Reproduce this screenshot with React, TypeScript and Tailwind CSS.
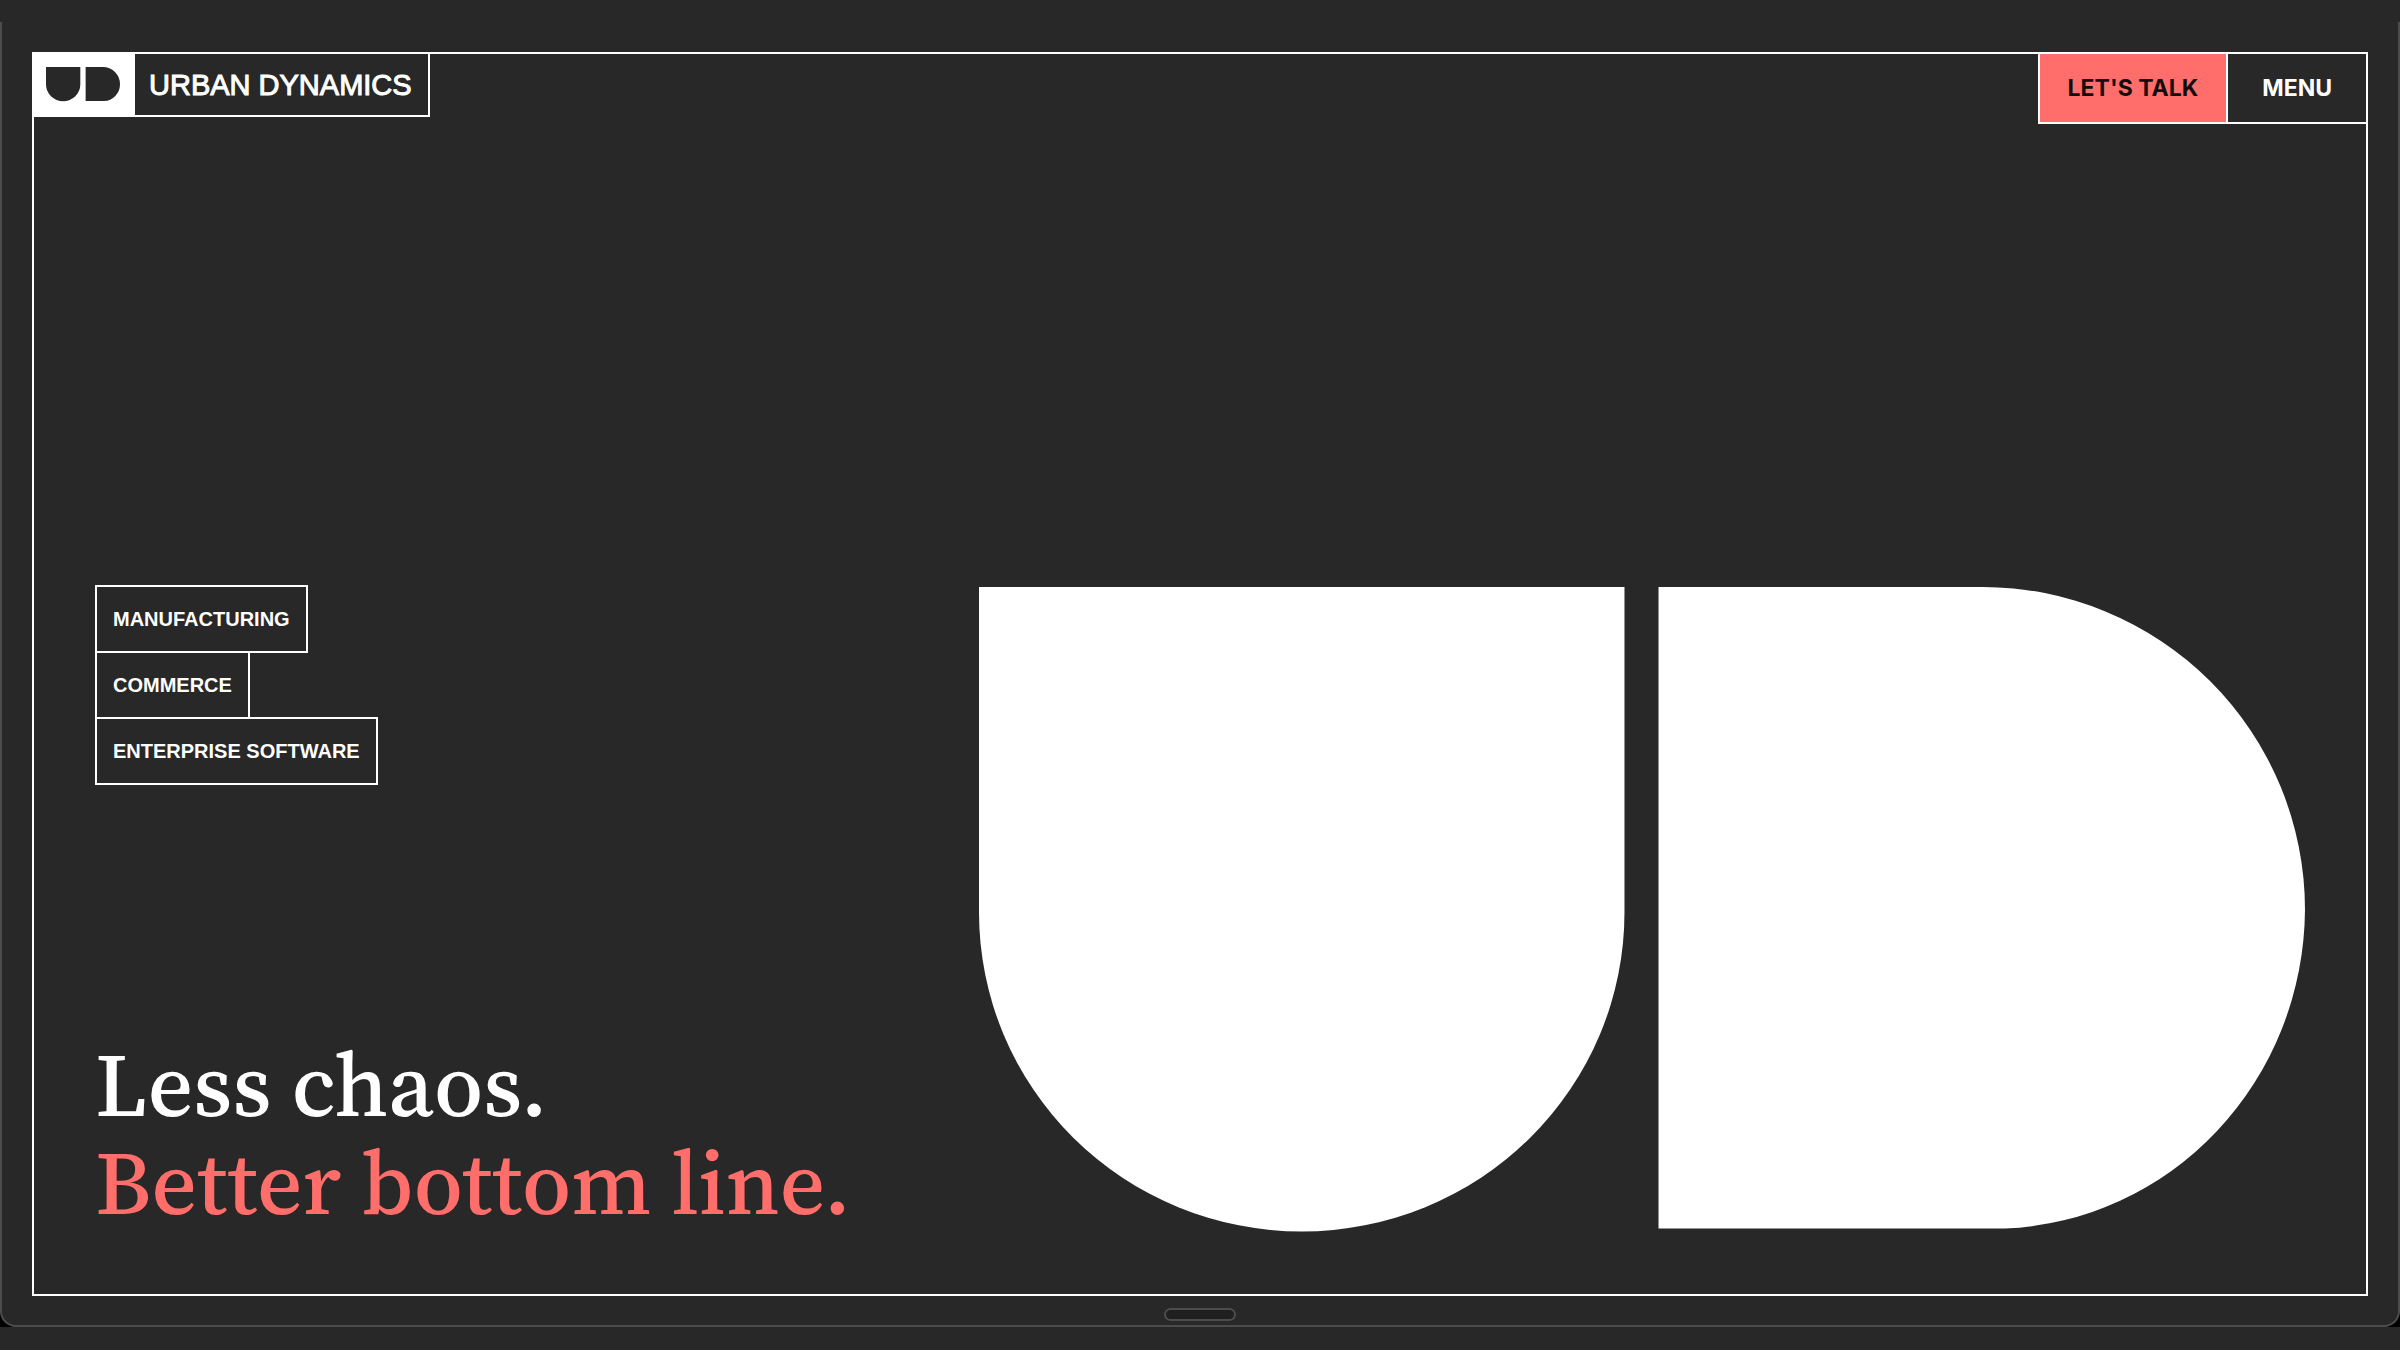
const tags = [
  { label: "Manufacturing", edges: "border-2" },
  { label: "Commerce", edges: "border-x-2" },
  { label: "Enterprise Software", edges: "border-2" },
];

function Mark({ gap, className }: { gap: number; className: string }) {
  return (
    <svg viewBox={`0 0 ${1291 + gap} 645`} className={className} fill="currentColor" aria-hidden="true">
      <path d="M0 0H645V325A322.5 319 0 0 1 0 325Z" />
      <path
        transform={`translate(${645 + gap})`}
        d="M0 0H323A322.5 322.5 0 0 1 646 322.5A312 321 0 0 1 346 641H0Z"
      />
    </svg>
  );
}

function Header() {
  return (
    <header className="flex items-start justify-between">
      <a href="#home" className="flex border-r-2 border-b-2 border-white">
        <span className="flex items-center bg-white pr-[15px] pl-3 text-[#282828]">
          <Mark gap={100} className="w-[74px]" />
        </span>
        <span className="pt-[13px] pr-4 pb-[11px] pl-3.5 text-[29px] leading-[37px] text-white uppercase [-webkit-text-stroke:1px_white]">
          Urban Dynamics
        </span>
      </a>
      <nav className="flex divide-x-2 divide-white border-b-2 border-l-2 border-white font-['Inter',sans-serif] text-[23px] leading-[68px] font-bold uppercase">
        <a href="#talk" className="bg-[#ff6e6a] px-7 text-[#140c0c]">
          Let's talk
        </a>
        <button type="button" className="px-[34px] text-white uppercase">
          Menu
        </button>
      </nav>
    </header>
  );
}

function Hero() {
  return (
    <main className="mt-auto flex justify-between px-[61px] pb-[62px]">
      <div className="-mt-0.5 flex flex-col justify-between">
        <ul className="flex flex-col items-start text-xl leading-6 font-bold text-white uppercase">
          {tags.map((tag) => (
            <li key={tag.label} className={`${tag.edges} border-white px-4 py-5`}>
              {tag.label}
            </li>
          ))}
        </ul>
        <h1 className="font-['Source_Serif_4','Noto_Serif_CJK_SC','Liberation_Serif',serif] text-[89px] leading-[98px] font-medium text-white">
          Less chaos.
          <br />
          <span className="text-[#ff6e6a]">Better bottom line.</span>
        </h1>
      </div>
      <Mark gap={34} className="w-3/5 text-white" />
    </main>
  );
}

export default function App() {
  return (
    <div className="flex min-h-screen flex-col bg-[#282828] pt-[22px] pb-[23px] font-['Liberation_Sans',sans-serif]">
      <div className="flex flex-1 bg-black">
        <div className="flex flex-1 flex-col rounded-b-2xl border-x-2 border-b-2 border-[#4c4c4c] bg-[#282828] px-[30px] pt-[30px]">
          <div className="flex flex-1 flex-col border-2 border-white">
            <Header />
            <Hero />
          </div>
          <div className="mt-3 mb-1 h-[13px] w-[72px] self-center rounded-full border-2 border-[#4c4c4c] bg-[#1f1f1f]" />
        </div>
      </div>
    </div>
  );
}
